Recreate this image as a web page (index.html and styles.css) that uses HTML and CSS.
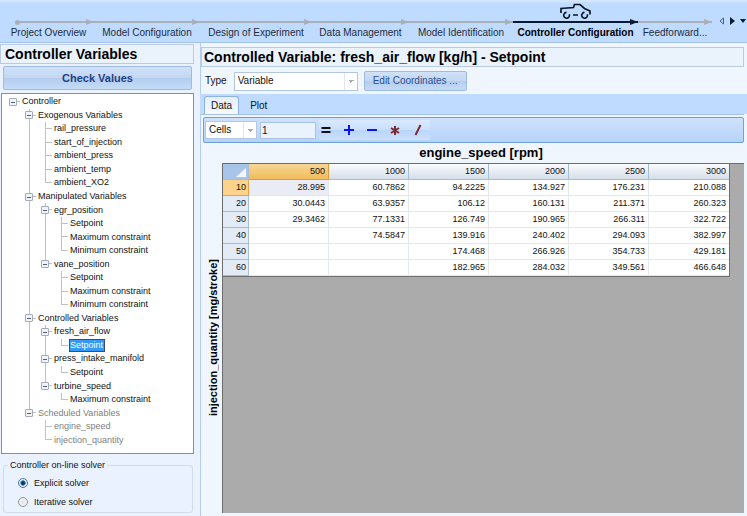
FILE: index.html
```html
<!DOCTYPE html>
<html lang="en">
<head>
<meta charset="utf-8">
<title>Controller Configuration</title>
<link rel="stylesheet" href="styles.css">
</head>
<body>
<nav class="steps" aria-label="Workflow">
  <a class="step first" href="#"><span class="rail"></span>Project Overview</a>
  <a class="step" href="#"><span class="rail"></span>Model Configuration</a>
  <a class="step" href="#"><span class="rail"></span>Design of Experiment</a>
  <a class="step" href="#"><span class="rail"></span>Data Management</a>
  <a class="step" href="#"><span class="rail"></span>Model Identification</a>
  <a class="step current" href="#" aria-current="step">
    <svg class="car" viewBox="0 0 32 17" width="32" height="17" aria-hidden="true"><path d="M1 12V7.500L13.500 6.500L14.500 3.500H20L24.500 7.500L30 10V13.500" fill="none" stroke="#0b1626" stroke-width="1.700"/><path d="M6.500 11.400A2.900 2.900 0 1 0 9.300 13.300M13 14H18M24.500 11.400A2.900 2.900 0 1 0 27.300 13.300" fill="none" stroke="#0b1626" stroke-width="1.600"/></svg>
    <span class="rail"></span>Controller Configuration</a>
  <a class="step" href="#"><span class="rail"></span>Feedforward...</a>
  <div class="pager">
    <button aria-label="Previous"><svg width="5" height="8" viewBox="0 0 5 8"><path d="M4.500 1V7L1 4Z" fill="none" stroke="#3f5f96"/></svg></button>
    <button aria-label="Next"><svg width="5" height="8" viewBox="0 0 5 8"><path d="M0 0V8L5 4Z" fill="#0b1a33"/></svg></button>
    <button aria-label="More"><svg width="6" height="4" viewBox="0 0 6 4"><path d="M0 0H6L3 4Z" fill="#0b1a33"/></svg></button>
  </div>
</nav>
<div class="work">
  <aside class="side">
    <h2 class="title">Controller Variables</h2>
    <button class="btn check">Check Values</button>
    <ul class="tree">
      <li><i class="g h"><button aria-label="Toggle"></button></i><span>Controller</span></li>
      <li><i class="g"></i><i class="g v h"><button aria-label="Toggle"></button></i><span>Exogenous Variables</span></li>
      <li><i class="g"></i><i class="g v"></i><i class="g v h"></i><span>rail_pressure</span></li>
      <li><i class="g"></i><i class="g v"></i><i class="g v h"></i><span>start_of_injection</span></li>
      <li><i class="g"></i><i class="g v"></i><i class="g v h"></i><span>ambient_press</span></li>
      <li><i class="g"></i><i class="g v"></i><i class="g v h"></i><span>ambient_temp</span></li>
      <li><i class="g"></i><i class="g v"></i><i class="g v h end"></i><span>ambient_XO2</span></li>
      <li><i class="g"></i><i class="g v h"><button aria-label="Toggle"></button></i><span>Manipulated Variables</span></li>
      <li><i class="g"></i><i class="g v"></i><i class="g v h"><button aria-label="Toggle"></button></i><span>egr_position</span></li>
      <li><i class="g"></i><i class="g v"></i><i class="g v"></i><i class="g v h"></i><span>Setpoint</span></li>
      <li><i class="g"></i><i class="g v"></i><i class="g v"></i><i class="g v h"></i><span>Maximum constraint</span></li>
      <li><i class="g"></i><i class="g v"></i><i class="g v"></i><i class="g v h end"></i><span>Minimum constraint</span></li>
      <li><i class="g"></i><i class="g v"></i><i class="g v h end"><button aria-label="Toggle"></button></i><span>vane_position</span></li>
      <li><i class="g"></i><i class="g v"></i><i class="g"></i><i class="g v h"></i><span>Setpoint</span></li>
      <li><i class="g"></i><i class="g v"></i><i class="g"></i><i class="g v h"></i><span>Maximum constraint</span></li>
      <li><i class="g"></i><i class="g v"></i><i class="g"></i><i class="g v h end"></i><span>Minimum constraint</span></li>
      <li><i class="g"></i><i class="g v h"><button aria-label="Toggle"></button></i><span>Controlled Variables</span></li>
      <li><i class="g"></i><i class="g v"></i><i class="g v h"><button aria-label="Toggle"></button></i><span>fresh_air_flow</span></li>
      <li><i class="g"></i><i class="g v"></i><i class="g v"></i><i class="g v h end"></i><span class="selected">Setpoint</span></li>
      <li><i class="g"></i><i class="g v"></i><i class="g v h"><button aria-label="Toggle"></button></i><span>press_intake_manifold</span></li>
      <li><i class="g"></i><i class="g v"></i><i class="g v"></i><i class="g v h end"></i><span>Setpoint</span></li>
      <li><i class="g"></i><i class="g v"></i><i class="g v h end"><button aria-label="Toggle"></button></i><span>turbine_speed</span></li>
      <li><i class="g"></i><i class="g v"></i><i class="g"></i><i class="g v h end"></i><span>Maximum constraint</span></li>
      <li class="off"><i class="g"></i><i class="g v h end"><button aria-label="Toggle"></button></i><span>Scheduled Variables</span></li>
      <li class="off"><i class="g"></i><i class="g"></i><i class="g v h"></i><span>engine_speed</span></li>
      <li class="off"><i class="g"></i><i class="g"></i><i class="g v h end"></i><span>injection_quantity</span></li>
    </ul>
    <fieldset class="solver">
      <legend>Controller on-line solver</legend>
      <label><input type="radio" name="solver" checked>Explicit solver</label>
      <label><input type="radio" name="solver">Iterative solver</label>
    </fieldset>
  </aside>
  <main class="main">
    <h1 class="title">Controlled Variable: fresh_air_flow [kg/h] - Setpoint</h1>
    <div class="type">
      <label for="type">Type</label>
      <select id="type"><option>Variable</option></select>
      <button class="btn">Edit Coordinates ...</button>
    </div>
    <div class="tabs" role="tablist">
      <button class="tab active" role="tab" aria-selected="true">Data</button>
      <button class="tab" role="tab" aria-selected="false">Plot</button>
    </div>
    <section class="pane">
      <div class="toolbar">
        <select aria-label="Apply to"><option>Cells</option></select>
        <input type="text" value="1" aria-label="Operand">
        <div class="ops">
          <button class="eq" aria-label="Set"><svg width="12" height="12" viewBox="0 0 12 12"><path d="M1.500 4H10.500M1.500 8H10.500" /></svg></button>
          <button class="blue" aria-label="Add"><svg width="12" height="12" viewBox="0 0 12 12"><path d="M1 6H11M6 1V11"/></svg></button>
          <button class="blue" aria-label="Subtract"><svg width="12" height="12" viewBox="0 0 12 12"><path d="M1 6H11"/></svg></button>
          <button class="red" aria-label="Multiply"><svg width="12" height="12" viewBox="0 0 12 12"><path d="M6 2V11M2 4L10 9M10 4L2 9"/></svg></button>
          <button class="red" aria-label="Divide"><svg width="12" height="12" viewBox="0 0 12 12"><path d="M8.500 1L3.500 11"/></svg></button>
        </div>
      </div>
      <div class="map">
        <div class="xlabel">engine_speed [rpm]</div>
        <div class="ylabel"><span>injection_quantity [mg/stroke]</span></div>
        <div class="grid">
          <table>
            <thead><tr><th class="corner"><svg width="10" height="10" viewBox="0 0 10 10"><path d="M10 1V10H0Z" fill="#f4f8fd"/></svg></th><th class="hot">500</th><th>1000</th><th>1500</th><th>2000</th><th>2500</th><th>3000</th></tr></thead>
            <tbody>
              <tr><th class="hot">10</th><td class="cur">28.995</td><td>60.7862</td><td>94.2225</td><td>134.927</td><td>176.231</td><td>210.088</td></tr>
              <tr><th>20</th><td>30.0443</td><td>63.9357</td><td>106.12</td><td>160.131</td><td>211.371</td><td>260.323</td></tr>
              <tr><th>30</th><td>29.3462</td><td>77.1331</td><td>126.749</td><td>190.965</td><td>266.311</td><td>322.722</td></tr>
              <tr><th>40</th><td></td><td>74.5847</td><td>139.916</td><td>240.402</td><td>294.093</td><td>382.997</td></tr>
              <tr><th>50</th><td></td><td></td><td>174.468</td><td>266.926</td><td>354.733</td><td>429.181</td></tr>
              <tr><th>60</th><td></td><td></td><td>182.965</td><td>284.032</td><td>349.561</td><td>466.648</td></tr>
            </tbody>
          </table>
        </div>
      </div>
    </section>
  </main>
</div>
</body>
</html>
```

FILE: styles.css
```css
* { box-sizing: border-box; }
body {
  margin: 0;
  height: 100vh;
  display: flex;
  flex-direction: column;
  background: #e9f2fe;
  color: #111;
  font: 9px/14px "Liberation Sans", Arial, sans-serif;
  overflow: hidden;
}
button, select, input { font: inherit; color: inherit; margin: 0; }
button { padding: 0; border: 0; background: none; }

/* workflow bar */
.steps {
  flex: none;
  height: 43px;
  padding-left: 3px;
  display: grid;
  grid-template-columns: 91fr 106fr 112fr 97fr 104fr 125fr 74fr 35fr;
  background: linear-gradient(#d8e9ff, #bfdbff 4px);
  border-bottom: 1px solid #a3c3ec;
  font: 10px/12px "Liberation Sans", Arial, sans-serif;
}
.step {
  display: flex;
  flex-direction: column;
  justify-content: flex-end;
  align-items: center;
  padding-bottom: 3px;
  color: #1d2b40;
  text-decoration: none;
  white-space: nowrap;
}
.car { overflow: visible; }
.rail {
  align-self: stretch;
  height: 8px;
  margin-bottom: 1px;
  color: #a9b0bb;
  background:
    linear-gradient(currentColor, currentColor) 0 center / 100% 2px no-repeat;
  position: relative;
}
.rail::after {
  content: "";
  position: absolute;
  right: 0;
  top: 1px;
  border: solid transparent;
  border-width: 3px 0 3px 8px;
  border-left-color: currentColor;
}
.first .rail { margin-left: 14px; }
.first .rail::before {
  content: "";
  position: absolute;
  left: -2px;
  top: 2px;
  width: 5px;
  height: 5px;
  border-radius: 50%;
  background: currentColor;
}
.step.current { color: #000; font-weight: bold; }
.current .rail { color: #0b1a33; }
.pager { display: flex; justify-content: space-between; align-items: center; padding: 0 1px 0 7px; }
.pager button { display: flex; }

.work { flex: 1; min-height: 0; display: flex; gap: 6px; }
.title {
  margin: 0;
  padding-left: 4px;
  border: 1px solid #b9cbe3;
  background: #eaf2fc;
  color: #000;
  font: bold 14px/18px "Liberation Sans", Arial, sans-serif;
  white-space: nowrap;
}
.btn {
  border: 1px solid #9ebbe0;
  border-radius: 2px;
  background: linear-gradient(#d0e1f8, #c3d7f2 50%, #b4cdee 50%, #c4dbf8);
  color: #2b4f8e;
  font: 10px/18px "Liberation Sans", Arial, sans-serif;
}

/* sidebar */
.side { width: 194px; flex: none; display: flex; flex-direction: column; padding: 1px 0 3px; }
.check { margin: 2px 2px 3px 3px; font-size: 11px; line-height: 22px; font-weight: bold; color: #1f3f85; }
.tree {
  flex: 1;
  margin: 0 0 0 1px;
  padding: 1px 0 6px 3px;
  list-style: none;
  display: grid;
  grid-auto-rows: 1fr;
  border: 1px solid #7f8fac;
  background: #fff;
}
.tree li { display: flex; align-items: center; min-height: 0; }
.tree span { line-height: 13px; padding: 0 2px 0 1px; white-space: nowrap; }
.tree .off span { color: #808080; }
.tree .selected { background: #3399ff; color: #fff; outline: 1px solid #35506e; outline-offset: -1px; }
.g {
  --v: #bdc1c8;
  flex: none;
  align-self: stretch;
  width: 16px;
  display: flex;
  align-items: center;
  justify-content: center;
}
.g.v { background: linear-gradient(var(--v), var(--v)) 8px 0 / 1px 100% no-repeat; }
.g.h { background: linear-gradient(var(--v), var(--v)) 8px 6px / 7px 1px no-repeat; }
.g.v.h {
  background:
    linear-gradient(var(--v), var(--v)) 8px 0 / 1px 100% no-repeat,
    linear-gradient(var(--v), var(--v)) 8px 6px / 7px 1px no-repeat;
}
.g.v.h.end {
  background:
    linear-gradient(var(--v), var(--v)) 8px 0 / 1px 7px no-repeat,
    linear-gradient(var(--v), var(--v)) 8px 6px / 7px 1px no-repeat;
}
.g button {
  width: 8px;
  height: 8px;
  border: 1px solid #a4abb8;
  border-radius: 1px;
  background: linear-gradient(#4a5f8c, #4a5f8c) 1px 3px / 4px 1px no-repeat, #f1f3f7;
}
.solver {
  margin: 4px 1px 0 3px;
  padding: 4px 0 3px 14px;
  border: 1px solid #d0dce9;
  border-radius: 3px;
  display: flex;
  flex-direction: column;
  gap: 5px;
}
.solver legend { margin-left: -10px; padding: 0 2px; }
.solver label { display: flex; align-items: center; gap: 6px; }
.solver input {
  appearance: none;
  width: 10px;
  height: 10px;
  border: 1px solid #8d949e;
  border-radius: 50%;
  background: radial-gradient(#e2e4e7, #fafafa);
}
.solver input:checked { border-color: #51729a; background: radial-gradient(#12385c 25%, #4fa3d6 45%, #eef4f9 55%); }

/* main area */
.main {
  flex: 1;
  min-width: 0;
  display: flex;
  flex-direction: column;
  padding: 4px 3px 3px 0;
  border-left: 1px solid #b5cdee;
  background: #f0f6fe;
}
.main > .title { padding-left: 2px; }
.type { display: flex; align-items: center; gap: 6px; padding: 4px 4px 3px; font: 10px/14px "Liberation Sans", Arial, sans-serif; }
.type select { flex: 0 1 124px; height: 19px; margin-left: 1px; }
.type .btn { flex: 0 1 103px; white-space: nowrap; }
select {
  appearance: none;
  border: 1px solid #b3c7e1;
  border-radius: 0;
  padding: 0 3px;
  background:
    conic-gradient(from 315deg at 50% 100%, #a3abb8 90deg, transparent 90deg) right 3px center / 6px 3px no-repeat,
    linear-gradient(#dfe6f0, #dfe6f0) right 12px center / 1px 100% no-repeat,
    #fff;
  background:
    linear-gradient(to top right, transparent 50%, #a3abb8 50%) right 6px center / 3px 3px no-repeat,
    linear-gradient(to top left, transparent 50%, #a3abb8 50%) right 3px center / 3px 3px no-repeat,
    linear-gradient(#dfe6f0, #dfe6f0) right 12px center / 1px 100% no-repeat,
    #fff;
}
.tabs { display: flex; height: 20px; flex: none; margin: 0 -3px 0 -1px; padding: 2px 0 0 4px; background: #bfdbff; font: 10px/16px "Liberation Sans", Arial, sans-serif; }
.tab { padding: 0 10px; border: 1px solid transparent; border-bottom: 0; }
.tab.active { padding: 0 6px; border-color: #8db2e3; border-radius: 3px 3px 0 0; background: linear-gradient(#e6effb, #f5f9ff); }
.pane { flex: 1; min-height: 0; display: flex; flex-direction: column; border-top: 1px solid #a3c3ee; padding: 2px 0 0 2px; }
.toolbar { display: flex; align-items: center; gap: 3px; height: 26px; flex: none; padding: 0 1px; border: 1px solid #6f9fdc; border-radius: 2px; background: linear-gradient(#cfe2fc, #b6d3f9); }
.toolbar select, .toolbar input { font: 10px/14px "Liberation Sans", Arial, sans-serif; }
.toolbar select { width: 52px; height: 18px; }
.toolbar input { width: 56px; height: 17px; padding: 0 1px; border: 1px solid #a9c3e4; background: #eaf2fb; }
.ops { display: flex; gap: 11px; padding: 4px 6px 4px 1px; background: linear-gradient(#dbeafd, #c9dffb 50%, #b9d5fa 50%, #cbe0fc); }
.ops svg { display: block; fill: none; stroke: currentColor; stroke-width: 2; }
.eq { color: #111; }
.blue { color: #0a14f0; }
.red { color: #7d2a2e; }
.map {
  flex: 1;
  min-height: 0;
  display: grid;
  grid-template-columns: 19px minmax(0, 1fr);
  grid-template-rows: 20px minmax(0, 1fr);
}
.xlabel { grid-column: 2; padding-right: 4px; text-align: center; color: #000; font: bold 13px/20px "Liberation Sans", Arial, sans-serif; }
.ylabel { display: flex; align-items: center; justify-content: center; color: #000; font: bold 11px/12px "Liberation Sans", Arial, sans-serif; }
.ylabel span { writing-mode: vertical-rl; transform: rotate(180deg); white-space: nowrap; }
.grid { background: #ababab; border-top: 1px solid #6c6c6c; border-left: 1px solid #6c6c6c; padding-right: 14px; }
table { width: 100%; table-layout: fixed; border-collapse: separate; border-spacing: 0; background: #fff; border-right: 1px solid #6f6f6f; border-bottom: 1px solid #6f6f6f; }
th, td { height: 16px; padding: 0 3px; text-align: right; font-weight: normal; line-height: 15px; border-right: 1px solid #e3e7ee; border-bottom: 1px solid #e3e7ee; }
tr > :last-child { border-right: 0; }
thead th { background: linear-gradient(#fbfcfe, #d5deea); border-color: #a6bdd6; }
tbody th { padding: 0 2px; background: #e3ebf6; border-color: #a6bdd6; }
th.corner { width: 26px; padding: 0 2px; background: #a9c4e9; }
.corner svg { display: block; margin-left: auto; }
thead .hot { background: linear-gradient(#f8d694, #f0bc5c); border-color: #e09a3c; }
tbody .hot { background: #fdd28a; border-color: #e8a24a; }
.cur { background: #e9ebf5; }
```
